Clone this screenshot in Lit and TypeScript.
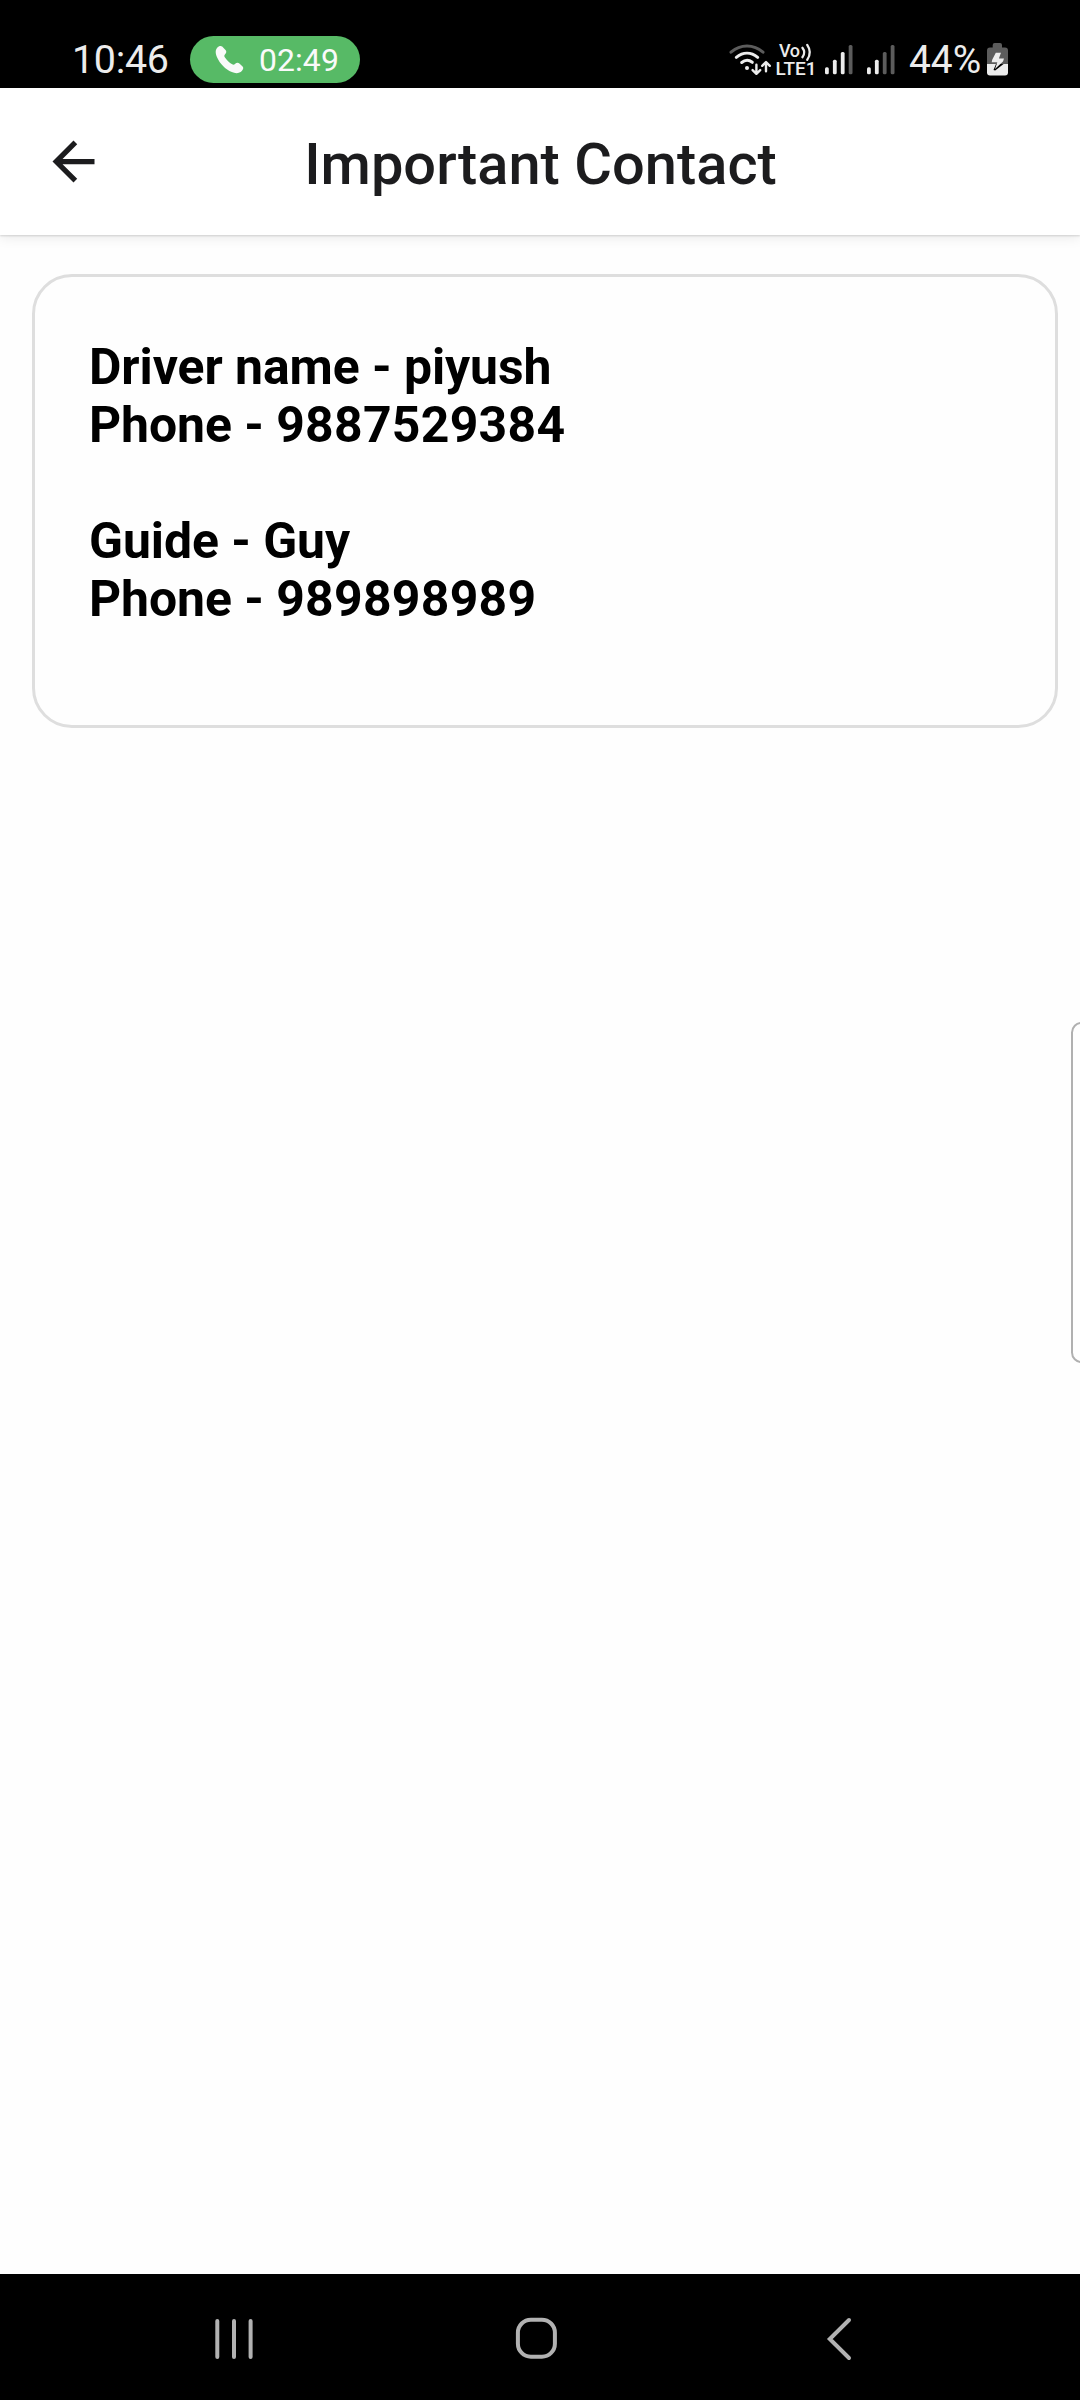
import { LitElement, html, css, svg } from "lit";
import { customElement, property } from "lit/decorators.js";

const BAR_TOPS = [67.3, 59.7, 52, 45];

@customElement("signal-bars")
class SignalBars extends LitElement {
  @property({ type: Number }) level = 0;

  static styles = css`
    :host { display: block; height: 57px; }
    svg { display: block; }
    .on { fill: #ececec; }
    .off { fill: #5c5c5c; }
  `;

  render() {
    return html`<svg width="30" height="57" viewBox="0 31 30 57">
      ${BAR_TOPS.map(
        (top, i) => svg`<rect class=${i < this.level ? "on" : "off"}
          x=${i * 7.9 + 1} y=${top} width="3.8" height=${74.2 - top} rx="1.5" />`
      )}
    </svg>`;
  }
}

@customElement("status-bar")
class StatusBar extends LitElement {
  static styles = css`
    :host {
      display: flex;
      box-sizing: border-box;
      height: 88px;
      padding: 31px 70px 0 72px;
      align-items: center;
      justify-content: space-between;
      background: #000;
      color: #ececec;
      font-size: 39.4px;
      line-height: 57px;
      white-space: nowrap;
    }
    svg { display: block; }
    .left, .right { display: flex; align-items: center; height: 57px; }
    .clock { width: 118px; letter-spacing: -0.3px; }
    .call {
      display: flex;
      align-items: center;
      box-sizing: border-box;
      width: 170px;
      height: 47px;
      padding-left: 25px;
      border-radius: 24px;
      background: #57ba66;
      color: #fafafa;
      font-size: 31.9px;
    }
    .duration { margin-left: 15px; padding-top: 2px; letter-spacing: 0.1px; }
    .net { font-size: 18px; font-weight: 500; fill: #ececec; }
    .first { margin-left: 6px; }
    .second { margin-left: 12px; }
    .battery-level { width: 76px; margin-left: 13px; font-size: 38.9px; }
  `;

  render() {
    return html`
      <div class="left">
        <span class="clock">10:46</span>
        <div class="call">
          <svg width="29" height="29" viewBox="0 0 29 29">
            <path fill="#fafafa" d="M2.2 2.8C3.6 1.2 5.7.5 7.2 1.6L10.5 5C11.9 6.5 11.3 8 10.1 9.2C9.2 10.2 9.1 11.2 9.8 12.2C11.6 15 14.4 17.6 17.2 19.3C18.3 20 19.2 19.8 20.2 18.8C21.5 17.5 23 17.2 24.4 18.4L27.6 21.6C28.8 23 28.2 24.6 26.8 26.1C24.4 28.6 20.4 28.7 16.8 27.1C10.5 24.3 4.8 18.6 2 12.2C.5 8.7.1 5.1 2.2 2.8Z" />
          </svg>
          <span class="duration">02:49</span>
        </div>
      </div>
      <div class="right">
        <svg width="90" height="57" viewBox="728 31 90 57" fill="none" stroke="#ececec"
          stroke-width="3" stroke-linecap="round" stroke-linejoin="round">
          <path stroke="#5c5c5c" d="M731 52.2C740.5 44 753.5 44 763 52.2" />
          <path d="M736.3 57.3C743 51.8 751 51.8 757.7 57.3" />
          <path d="M741.7 62.5C745 59.8 749 59.8 752.3 62.3" />
          <circle cx="747" cy="68" r="2" fill="#ececec" stroke="none" />
          <path stroke-width="2.4" d="M756.4 64.8V73.6M752.6 70.1L756.4 73.8L760.2 70.1M766 71.2V62.3M762.2 65.8L766 62L769.8 65.8" />
          <text class="net" stroke="none" x="779" y="56.8" textLength="21">Vo</text>
          <path stroke-width="2.3" d="M802.4 47.8Q806 52.5 802.4 57.2M807.2 44.9Q812.4 52.4 807.2 59.9" />
          <text class="net" stroke="none" x="775.5" y="75" textLength="41" lengthAdjust="spacingAndGlyphs">LTE1</text>
        </svg>
        <signal-bars class="first" level="3"></signal-bars>
        <signal-bars class="second" level="2"></signal-bars>
        <span class="battery-level">44%</span>
        <svg width="25" height="57" viewBox="985 31 25 57">
          <path fill="#5c5c5c" d="M987 64V50.5Q987 47.4 990 47.4H992.7V45Q992.7 43 994.7 43H1000Q1002 43 1002 45V47.4H1005Q1008 47.4 1008 50.5V64Z" />
          <path fill="#ececec" d="M987 64H1008V72.6Q1008 75.6 1005 75.6H990Q987 75.6 987 72.6Z" />
          <path fill="#000" d="M993.5 70L996 64H1003.6L995.2 70.6Z" />
          <path fill="#ececec" d="M995.8 52.8H1001L998.9 58.5H1004L1003 61.5L995 69L997.3 62.3H991.7L992.2 59.7Z" />
        </svg>
      </div>
    `;
  }
}

@customElement("app-header")
class AppHeader extends LitElement {
  @property() heading = "";

  static styles = css`
    :host {
      display: grid;
      grid-template-columns: 63px 1fr 63px;
      align-items: center;
      box-sizing: border-box;
      height: 147px;
      padding: 0 42px;
      background: #fff;
      color: #1c1c1e;
      box-shadow: 0 1px 2px rgba(0, 0, 0, 0.15), 0 3px 12px rgba(0, 0, 0, 0.08);
      z-index: 1;
    }
    .back { display: block; fill: #1c1c1e; }
    .title {
      margin: 0;
      padding: 5px 0 0 1px;
      text-align: center;
      font-size: 57.75px;
      line-height: 68px;
      font-weight: 500;
      letter-spacing: 0.03px;
    }
  `;

  render() {
    return html`
      <svg class="back" width="63" height="63" viewBox="0 0 24 24">
        <path d="M20 11H7.83l5.59-5.59L12 4l-8 8 8 8 1.41-1.41L7.83 13H20v-2z" />
      </svg>
      <h1 class="title">${this.heading}</h1>
    `;
  }
}

@customElement("nav-bar")
class NavBar extends LitElement {
  static styles = css`
    :host {
      display: flex;
      align-items: center;
      justify-content: space-between;
      box-sizing: border-box;
      height: 126px;
      padding: 4px 217px 0 210px;
      background: #000;
    }
    svg { display: block; fill: none; stroke: #b2b2b2; stroke-width: 4; stroke-linecap: round; }
  `;

  render() {
    return html`
      <svg width="48" height="48" viewBox="0 0 48 48"><path d="M7.3 6V42M24 6V42M40.6 6V42" /></svg>
      <svg width="48" height="48" viewBox="0 0 48 48"><rect x="4.9" y="4.7" width="37" height="37" rx="13" /></svg>
      <svg width="48" height="48" viewBox="0 0 48 48"><path d="M34 5L14.8 24L34 43" /></svg>
    `;
  }
}

@customElement("app-root")
class AppRoot extends LitElement {
  static styles = css`
    :host {
      display: flex;
      flex-direction: column;
      position: relative;
      width: 1080px;
      height: 2400px;
      overflow: hidden;
      background: #fefefe;
      font-family: Roboto, "Liberation Sans", sans-serif;
    }
    .content { flex: 1; padding: 39px 22px 0 32px; }
    .card {
      box-sizing: border-box;
      height: 454px;
      padding: 61px 54px;
      border: 3px solid #dedede;
      border-radius: 40px;
      background: #fefefe;
      color: #000;
      font-size: 49.9px;
      line-height: 58px;
      font-weight: 700;
      letter-spacing: -0.06px;
    }
    .contact { margin: 0 0 58px; }
    .phone { letter-spacing: 0.3px; }
    .edge {
      position: absolute;
      top: 1022px;
      right: -12px;
      box-sizing: border-box;
      width: 21px;
      height: 341px;
      border: 2px solid #b0b0b0;
      border-radius: 12px;
    }
  `;

  private contacts = [
    { role: "Driver name", name: "piyush", phone: "9887529384" },
    { role: "Guide", name: "Guy", phone: "989898989" },
  ];

  render() {
    return html`
      <status-bar></status-bar>
      <app-header heading="Important Contact"></app-header>
      <main class="content">
        <section class="card">
          ${this.contacts.map(
            (c) => html`<p class="contact">${c.role} - ${c.name}<br />Phone - <span class="phone">${c.phone}</span></p>`
          )}
        </section>
      </main>
      <nav-bar></nav-bar>
      <div class="edge"></div>
    `;
  }
}
